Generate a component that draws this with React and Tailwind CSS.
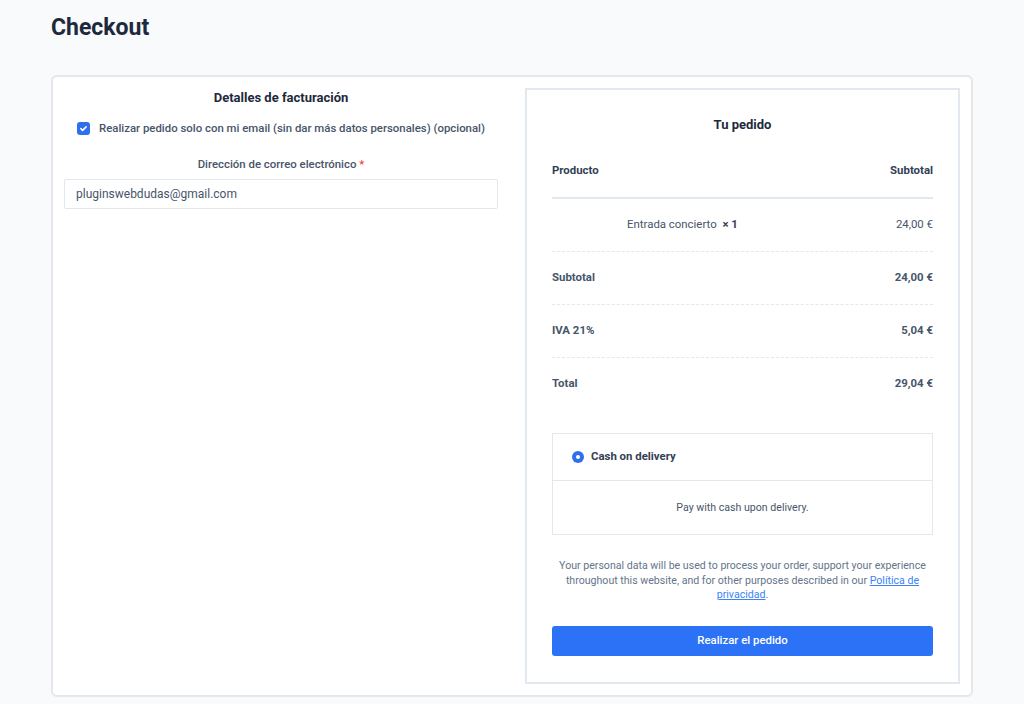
export default function App() {
  return (
    <div
      className="min-h-[704px] bg-[#f8fafc] px-[51px] pt-[12px] pb-[9px]"
      style={{ fontFamily: "Roboto, 'Liberation Sans', sans-serif" }}
    >
      <h1 className="text-[23px] leading-[32px] font-bold text-[#1e293b]">Checkout</h1>
      <div className="mt-[31px] w-[922px] rounded-md border-2 border-[#e5e7eb] bg-white p-[11px]">
        <div className="grid grid-cols-[434px_435px] justify-between">
          {/* Left column */}
          <div className="flex flex-col">
            <div className="mt-[1px] text-center text-[13px] leading-[18px] font-bold text-[#1e293b]">
              Detalles de facturación
            </div>
            <div className="mt-[13px] flex items-center justify-center gap-[9px]">
              <span className="flex h-[13px] w-[13px] items-center justify-center rounded-[3px] bg-[#2f6fed]">
                <svg width="9" height="9" viewBox="0 0 12 12" fill="none">
                  <path d="M2.5 6.2l2.3 2.3L9.5 3.8" stroke="white" strokeWidth="2" strokeLinecap="round" strokeLinejoin="round" />
                </svg>
              </span>
              <span className="text-[11.4px] leading-[16px] font-medium text-[#475569]">
                Realizar pedido solo con mi email (sin dar más datos personales) (opcional)
              </span>
            </div>
            <div className="mt-[20px] text-center text-[11.4px] leading-[16px] font-medium text-[#475569]">
              Dirección de correo electrónico <span className="text-[#ef4444]">*</span>
            </div>
            <div className="mt-[7px] flex h-[30px] items-center rounded-[2px] border border-[#e2e8f0] px-[11px] text-[12px] text-[#475569]">
              pluginswebdudas@gmail.com
            </div>
          </div>

          {/* Right column */}
          <div className="border-2 border-[#e2e8f0] px-[25px] pb-[26px]">
            <div className="pt-[26px] text-center text-[13px] leading-[18px] font-bold text-[#1e293b]">
              Tu pedido
            </div>
            <div className="mt-[11px] text-[11.4px] text-[#475569]">
              <div className="grid h-[54px] grid-cols-[261px_1fr] items-center border-b-2 border-[#e2e8f0] font-bold text-[#334155]">
                <span>Producto</span>
                <span className="text-right">Subtotal</span>
              </div>
              <div className="grid h-[53px] grid-cols-[261px_1fr] items-center border-b border-dashed border-[#e5e7eb]">
                <span className="text-center">
                  Entrada concierto <span className="ml-[3px] font-bold text-[#334155]">× 1</span>
                </span>
                <span className="text-right">24,00 €</span>
              </div>
              <div className="flex h-[53px] items-center justify-between border-b border-dashed border-[#e5e7eb] font-bold">
                <span>Subtotal</span>
                <span>24,00 €</span>
              </div>
              <div className="flex h-[53px] items-center justify-between border-b border-dashed border-[#e5e7eb] font-bold">
                <span>IVA 21%</span>
                <span>5,04 €</span>
              </div>
              <div className="flex h-[52px] items-center justify-between font-bold">
                <span>Total</span>
                <span>29,04 €</span>
              </div>
            </div>

            <div className="mt-[23px] border border-[#e2e8f0]">
              <div className="flex h-[47px] items-center gap-[7px] border-b border-[#e2e8f0] pl-[19px]">
                <span className="flex h-[12px] w-[12px] items-center justify-center rounded-full bg-[#2f6fed]">
                  <span className="h-[4px] w-[4px] rounded-full bg-white" />
                </span>
                <span className="text-[11.4px] font-bold text-[#334155]">Cash on delivery</span>
              </div>
              <div className="flex h-[53px] items-center justify-center text-[10.6px] text-[#475569]">
                Pay with cash upon delivery.
              </div>
            </div>

            <p className="mt-[24px] px-[6px] text-center text-[10.6px] leading-[14.5px] text-[#64748b]">
              Your personal data will be used to process your order, support your experience throughout this website, and for other purposes described in our{" "}
              <a className="text-[#3b82f6] underline">Política de privacidad</a>.
            </p>

            <button className="mt-[23px] flex h-[30px] w-full items-center justify-center rounded-[3px] bg-[#2b72f6] text-[11.4px] font-medium text-white">
              Realizar el pedido
            </button>
          </div>
        </div>
      </div>
    </div>
  );
}
